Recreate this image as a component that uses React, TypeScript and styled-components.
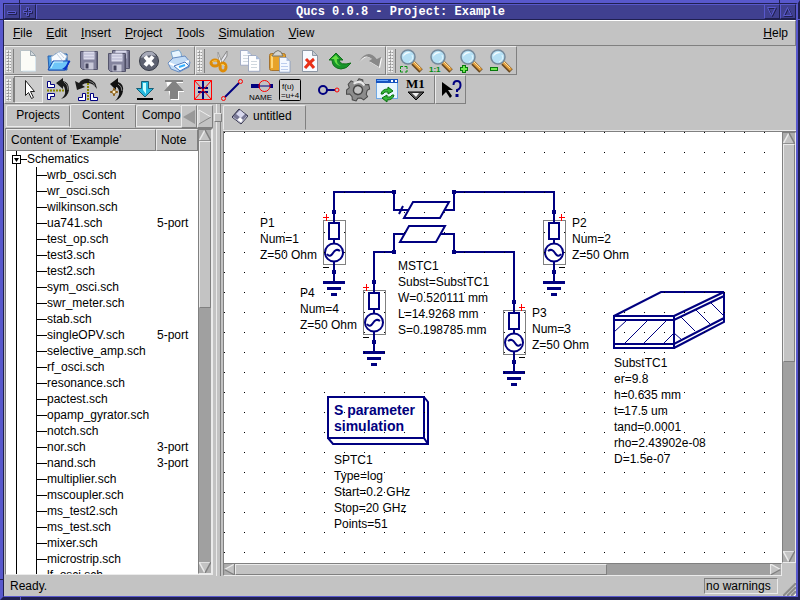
import React from "react";
import styled, { createGlobalStyle, css } from "styled-components";

const c = {
  face: "#c3c3c3",
  light: "#ebebeb",
  dark: "#808080",
  trough: "#a0a0a0",
  frameLight: "#5858cc",
  frame: "#404090",
  frameDark: "#202050",
  navy: "#000080",
};

const Global = createGlobalStyle`
  * { box-sizing: border-box; }
  html, body { margin: 0; height: 100%; overflow: hidden; }
  #root { height: 100%; }
  body, button, table {
    font-family: "Liberation Sans", Arial, sans-serif;
    font-size: 12px;
    line-height: 16px;
    color: #000;
  }
  button { margin: 0; padding: 0; border: 0; background: none; cursor: default; }
`;

const raised = css`
  border: 1px solid;
  border-color: ${c.light} ${c.dark} ${c.dark} ${c.light};
`;

const Frame = styled.div`
  position: relative;
  height: 100vh;
  display: flex;
  border-style: solid;
  border-width: 3px 2px 3px 3px;
  border-color: ${c.frameLight} ${c.frameDark} ${c.frameDark} ${c.frameLight};
  &::before {
    content: "";
    position: absolute;
    inset: -3px -2px -3px -3px;
    pointer-events: none;
    background:
      linear-gradient(${c.frameDark}, ${c.frameDark}) 19px 0 / 1px 3px no-repeat,
      linear-gradient(${c.frameDark}, ${c.frameDark}) 0 19px / 3px 1px no-repeat,
      linear-gradient(${c.frameDark}, ${c.frameDark}) right 20px top 0 / 1px 3px no-repeat,
      linear-gradient(${c.frameLight}, ${c.frameLight}) right 0 top 19px / 3px 1px no-repeat,
      linear-gradient(${c.frameDark}, ${c.frameDark}) 0 calc(100% - 20px) / 3px 1px no-repeat,
      linear-gradient(${c.frameLight}, ${c.frameLight}) 20px 100% / 1px 3px no-repeat;
  }
`;

const Window = styled.div`
  flex: 1;
  min-width: 0;
  display: flex;
  flex-direction: column;
  border-style: solid;
  border-width: 1px 2px 1px 1px;
  border-color: ${c.frameDark} ${c.frameLight} ${c.frameLight} ${c.frameDark};
  background: ${c.face};
`;

const TitleBar = styled.header`
  display: flex;
  height: 16px;
  flex: none;
  background: ${c.frame};
  border-bottom: 1px solid ${c.frameDark};
`;

const TitleText = styled.h1`
  flex: 1;
  margin: 0;
  border-top: 1px solid ${c.frameLight};
  border-left: 1px solid ${c.frameLight};
  color: #fff;
  text-align: center;
  white-space: nowrap;
  font: bold 12px/15px "Liberation Mono", "Courier New", monospace;
`;

const TitleButton = styled.button`
  width: 16px;
  height: 15px;
  border: 1px solid;
  border-color: ${c.frameLight} ${c.frameDark} ${c.frameDark} ${c.frameLight};
  display: grid;
  place-items: center;
`;

const MenuBar = styled.nav`
  display: flex;
  flex: none;
  height: 26px;
  align-items: center;
  padding: 0 5px 0 7px;
  border-top: 1px solid #fff;
  border-bottom: 1px solid ${c.dark};
  border-right: 1px solid ${c.dark};
`;

const MenuItem = styled.button<{ $last?: boolean }>`
  padding: 0 2px;
  margin-right: ${(p) => (p.$last ? "0" : "10px")};
  margin-left: ${(p) => (p.$last ? "auto" : "0")};
`;

const MenuLabel = styled.span`
  display: inline-block;
  &::first-letter { text-decoration: underline; }
`;

const ToolRow = styled.div`
  display: flex;
  flex: none;
  height: 29px;
`;

const ToolBar = styled.div<{ $tail?: boolean }>`
  ${raised}
  display: flex;
  align-items: center;
  padding-right: ${(p) => (p.$tail ? "4px" : "0")};
`;

const Handle = styled.span`
  flex: none;
  width: 9px;
  height: 24px;
  border-right: 1px solid ${c.dark};
  background: radial-gradient(circle at 1px 1px, #eee 0 1px, transparent 1px) 1px 1px / 3px 3px,
    radial-gradient(circle at 2px 2px, #999 0 1px, transparent 1px) 1px 1px / 3px 3px;
  background-clip: content-box;
  padding: 1px 2px 1px 1px;
`;

const Tool = styled.button<{ $compact?: boolean; $active?: boolean }>`
  width: ${(p) => (p.$compact ? "29px" : "30px")};
  height: 27px;
  display: grid;
  place-items: center;
  ${(p) =>
    p.$active &&
    css`
      background: #cdcdcd;
      border: 1px solid;
      border-color: ${c.dark} ${c.light} ${c.light} ${c.dark};
    `}
  svg { display: block; overflow: visible; }
`;

const ToolGap = styled.span`
  width: 10px;
`;

const Workspace = styled.main`
  flex: 1;
  min-height: 0;
  display: flex;
`;

const SidePanel = styled.aside`
  width: 209px;
  flex: none;
  display: flex;
  flex-direction: column;
  padding-left: 1px;
`;

const Tabs = styled.div`
  display: flex;
  align-items: flex-end;
  height: 24px;
  flex: none;
  overflow: hidden;
  padding-left: 1px;
`;

const Tab = styled.button<{ $active?: boolean; $width: number }>`
  flex: none;
  width: ${(p) => p.$width}px;
  height: ${(p) => (p.$active ? "24px" : "22px")};
  margin-bottom: ${(p) => (p.$active ? "0" : "1px")};
  padding-bottom: ${(p) => (p.$active ? "3px" : "2px")};
  border: 1px solid;
  border-color: ${c.light} ${c.dark} ${(p) => (p.$active ? c.face : c.light)} ${c.light};
  border-radius: 2px 2px 0 0;
  overflow: hidden;
  white-space: nowrap;
`;

const ClippedTab = styled(Tab)`
  text-align: left;
  padding-left: 5px;
  flex: 1;
  border-right: 0;
`;

const TabArrow = styled.button`
  ${raised}
  width: 16px;
  height: 23px;
  flex: none;
  display: grid;
  place-items: center;
`;

const ListFrame = styled.section`
  flex: 1;
  min-height: 0;
  display: flex;
  margin-bottom: 1px;
  border: 1px solid;
  border-color: ${c.dark} ${c.light} ${c.light} ${c.dark};
`;

const ListView = styled.div`
  flex: 1;
  min-width: 0;
  overflow: hidden;
  background: #fff;
`;

const FileTable = styled.table`
  width: 100%;
  table-layout: fixed;
  border-collapse: separate;
  border-spacing: 0;
  th {
    ${raised}
    height: 22px;
    padding: 0 4px;
    background: ${c.face};
    font-weight: normal;
    text-align: left;
    white-space: nowrap;
  }
  th:last-child { width: 42px; }
  td { height: 16px; padding: 0; white-space: nowrap; }
  td:last-child { padding-left: 1px; }
`;

const TreeCell = styled.div<{ $root?: boolean }>`
  height: 16px;
  display: flex;
  align-items: center;
  padding-left: ${(p) => (p.$root ? "6px" : "10px")};
`;

const Trunk = styled.span`
  width: 20px;
  height: 16px;
  flex: none;
  border-left: 1px solid #000;
`;

const Limb = styled.span`
  width: 11px;
  height: 16px;
  flex: none;
  border-left: 1px solid #000;
  background: linear-gradient(#000, #000) 0 8px / 10px 1px no-repeat;
`;

const Expander = styled.button`
  display: block;
  width: 15px;
  height: 16px;
  svg { display: block; }
`;

const Bar = styled.div<{ $horizontal?: boolean }>`
  display: flex;
  flex: none;
  flex-direction: ${(p) => (p.$horizontal ? "row" : "column")};
  ${(p) => (p.$horizontal ? "height: 13px;" : "width: 14px;")}
  background: ${c.trough};
  border: 1px solid;
  border-color: ${c.dark} ${c.light} ${c.light} ${c.dark};
`;

const ArrowButton = styled.button`
  display: block;
  flex: none;
  line-height: 0;
  svg { display: block; }
`;

const Thumb = styled.div<{ $size: number }>`
  ${raised}
  background: ${c.face};
  flex: ${(p) => p.$size} 1 0;
`;

const Trough = styled.div<{ $size: number }>`
  flex: ${(p) => p.$size} 1 0;
`;

const Splitter = styled.div`
  width: 10px;
  flex: none;
  display: flex;
  flex-direction: column;
  align-items: center;
`;

const SplitLine = styled.span<{ $grow?: boolean }>`
  width: 5px;
  flex: ${(p) => (p.$grow ? "1" : "0 0 9px")};
  border-left: 1px solid ${c.light};
  border-right: 1px solid ${c.dark};
`;

const SplitGrip = styled.span`
  ${raised}
  width: 8px;
  height: 9px;
  flex: none;
`;

const Documents = styled.section`
  flex: 1;
  min-width: 0;
  display: flex;
  flex-direction: column;
`;

const DocTabs = styled.div`
  height: 27px;
  flex: none;
  display: flex;
  border-bottom: 1px solid ${c.light};
`;

const DocTab = styled.button`
  width: 83px;
  display: flex;
  align-items: center;
  gap: 5px;
  padding: 0 0 3px 8px;
  margin-top: 1px;
  border: 1px solid;
  border-color: ${c.light} ${c.dark} ${c.face} ${c.light};
  border-radius: 2px 2px 0 0;
`;

const CanvasRow = styled.div`
  flex: 1;
  min-height: 0;
  display: flex;
  border-top: 1px solid ${c.dark};
  border-left: 1px solid ${c.dark};
`;

const Canvas = styled.div`
  position: relative;
  flex: 1;
  min-width: 0;
  overflow: hidden;
  background: #fff;
`;

const Drawing = styled.svg`
  display: block;
  width: 100%;
  height: 100%;
`;

const Label = styled.div<{ $x: number; $y: number }>`
  position: absolute;
  left: ${(p) => p.$x}px;
  top: ${(p) => p.$y}px;
  white-space: pre;
`;

const SimTitle = styled(Label)`
  color: ${c.navy};
  font-weight: bold;
  font-size: 14px;
`;

const BottomRow = styled.div`
  display: flex;
  flex: none;
  padding-right: 14px;
  & > div { flex: 1; }
`;

const StatusBar = styled.footer`
  height: 20px;
  flex: none;
  display: flex;
  align-items: center;
  padding-left: 6px;
`;

const StatusText = styled.span`
  flex: 1;
`;

const Warning = styled.span`
  width: 74px;
  height: 16px;
  line-height: 15px;
  padding-left: 1px;
  border: 1px solid;
  border-color: ${c.dark} ${c.light} ${c.light} ${c.dark};
  white-space: nowrap;
`;

const SizeGrip = styled.svg`
  display: block;
  width: 15px;
  height: 14px;
  margin: 6px 0 0 3px;
`;

/* ---------- icons ---------- */

const pageShape = "M0 0h10l5 5v16h-15z";

const Floppy = ({ x = 0, y = 0 }: { x?: number; y?: number }) => (
  <g transform={`translate(${x} ${y})`}>
    <path d="M0 0h17v18h-15l-2-2z" fill="#85859f" stroke="#55556c" />
    <rect x="3" y="0" width="11" height="8" fill="#dcdcec" />
    <path d="M3 2.500h11M3 5.500h11" stroke="#b2b2cc" />
    <rect x="4" y="11" width="9" height="7" fill="#c8c8d8" />
    <rect x="5" y="12" width="3" height="5" fill="#43435c" />
    <path d="M16.500 1v16" stroke="#484860" />
  </g>
);

const Lens = ({ children }: { children?: React.ReactNode }) => (
  <>
    <path d="M14 14l8 8" stroke="#6b4a20" strokeWidth="5" />
    <path d="M14 13l8 8" stroke="#e2a040" strokeWidth="3" />
    <path d="M15 13l6 6" stroke="#ffdf9b" />
    <circle cx="9" cy="8" r="7" fill="#b6e0f4" stroke="#75899b" strokeWidth="1.500" />
    <path d="M4 8a5 5 0 0 1 8-4q-5 0-8 4z" fill="#f2fcff" />
    <path d="M13 6q2 5-3 7" fill="none" stroke="#e6f8ff" />
    {children}
  </>
);

const icons: Record<string, React.ReactNode> = {
  new: (
    <g transform="translate(3.500 1.500)">
      <path d={pageShape} fill="#fbfcf7" stroke="#b8c2c6" />
      <path d="M10 0v5h5z" fill="#d4dade" stroke="#9aa6ae" />
      <path d="M2 20.500h13v-14" stroke="#d8e6ee" fill="none" />
    </g>
  ),
  open: (
    <>
      <path d="M1 7h5l2-2h12v16H2z" fill="#4aa0e8" stroke="#2560b0" />
      <path d="M4 8l9-6 7 5-4 9H5z" fill="#f8fbff" stroke="#9fb4cc" />
      <path d="M12 3l5 6M10 5l5 6" stroke="#c2d2e2" />
      <path d="M1 21l5-9h17l-5 9z" fill="#6dc5f8" stroke="#1748b0" />
      <path d="M15 20q5-3 6-8h2l-4 9z" fill="#0832c4" />
      <path d="M4 19l3-6h9" stroke="#d6f5ff" fill="none" />
    </>
  ),
  save: <Floppy x={3.500} y={2.500} />,
  saveAll: <><Floppy x={5.500} y={1.500} /><Floppy x={1.500} y={4.500} /></>,
  close: (
    <>
      <circle cx="12" cy="12" r="9.500" fill="#5d6170" stroke="#383c48" />
      <path d="M4 9a8 8 0 0 1 15-2q-8-2-15 2z" fill="#a6a9b8" />
      <path d="M8 7.500l8 9M16 7.500l-8 9" stroke="#fff" strokeWidth="4" />
    </>
  ),
  print: (
    <>
      <path d="M6 10L4 3l8-2 2 3 1 6z" fill="#e8f6ff" stroke="#78a5cd" />
      <path d="M1 14l5-5 12-2 5 6-1 5-10 5-8-3z" fill="#c2dcf6" stroke="#658ac0" />
      <path d="M2 14l7 3 13-5" fill="none" stroke="#fff" strokeWidth="2" />
      <path d="M7 17l11-4 4 4-9 5z" fill="#f8fdff" stroke="#4a78c0" />
      <path d="M12 18l6-2" stroke="#35b0ff" strokeWidth="2" />
    </>
  ),
  cut: (
    <>
      <path d="M11 14L19 2v5l-6 9z" fill="#e8e8ee" stroke="#888" />
      <path d="M14 14L10 3v4l2 8z" fill="#fff" stroke="#999" />
      <ellipse cx="7" cy="14" rx="4" ry="3" fill="none" stroke="#dd8b08" strokeWidth="3" />
      <ellipse cx="15" cy="18" rx="3" ry="4" fill="none" stroke="#dd8b08" strokeWidth="3" />
      <path d="M4 13q2-2 5-1M13 16q2-2 4 1" stroke="#ffd050" fill="none" />
    </>
  ),
  copy: (
    <>
      <g transform="translate(2.500 1.500) scale(.7)"><path d={pageShape} fill="#fbfcff" stroke="#8b9aba" /><path d="M10 0v5h5z" fill="#b9c8df" /></g>
      <path d="M5 6.500h6M5 9.500h6M5 12.500h6" stroke="#d0d8df" />
      <g transform="translate(10.500 6.500) scale(.75)"><path d={pageShape} fill="#fff" stroke="#8b9aba" /><path d="M10 0v5h5z" fill="#a6b9d8" /></g>
      <path d="M13 12.500h6M13 15.500h6M13 18.500h6" stroke="#d0d8df" />
    </>
  ),
  paste: (
    <>
      <rect x="1.500" y="4.500" width="16" height="17" rx="2" fill="#e8a328" stroke="#a5722c" />
      <path d="M4 7v12" stroke="#ffd675" strokeWidth="2" />
      <path d="M4 7l3-4q3-3 6 0l2 4z" fill="#d5d5d0" stroke="#77776c" />
      <g transform="translate(11.500 8.500) scale(.7)"><path d={pageShape} fill="#f4f8ff" stroke="#7990b8" /><path d="M10 0v5h5z" fill="#b0c0dc" /></g>
      <path d="M13 14.500h6M13 17.500h7M13 20.500h7" stroke="#bccdee" />
    </>
  ),
  remove: (
    <>
      <g transform="translate(4.500 1.500)"><path d={pageShape} fill="#f7faff" stroke="#8e98a5" /><path d="M10 0v5h5z" fill="#c6ccd4" stroke="#8e98a5" /></g>
      <path d="M8 10q4 4 8 9M16 10q-5 4-9 9" fill="none" stroke="#e83018" strokeWidth="3" />
    </>
  ),
  undo: (
    <>
      <path d="M1 11L8 4l7 7h-4q1 6 12 3-4 6-10 6-9-1-9-9z" fill="#18952a" stroke="#107018" />
      <path d="M3 10l5-4 3 4H9q-1 5 4 7-6-1-7-7z" fill="#68e044" />
    </>
  ),
  redo: (
    <>
      <path d="M2 13Q9 4 15 11l-3 2 10 6 2-10-4 2Q11-1 2 13z" fill="#fff" />
      <path d="M1 12Q8 4 14 10l-3 2 10 6 2-10-4 2Q10-1 1 12z" fill="#888" />
    </>
  ),
  zoomFit: <Lens><path d="M1.500 20v-2.500H4M5.500 17.500H8V20M1.500 21v2H4M6 23h2v-2" stroke="#089010" fill="none" /></Lens>,
  zoomOne: <Lens><text x="0" y="23" fontFamily="Liberation Sans" fontSize="8" fontWeight="bold" fill="#008c10">1:1</text></Lens>,
  zoomIn: <Lens><path d="M5 16v8M1 20h8" stroke="#08780c" strokeWidth="4" /><path d="M5 17v6M2 20h6" stroke="#70e850" strokeWidth="2" /></Lens>,
  zoomOut: <Lens><path d="M1 20h8" stroke="#08780c" strokeWidth="4" /><path d="M2 20h6" stroke="#70e850" strokeWidth="2" /></Lens>,
  select: <path d="M8.500 2.500v15l3-3 3 6 2-1-3-6h4z" fill="#fff" stroke="#222" />,
  mirrorX: (
    <>
      <path d="M10 5L17 0v3q6 1 6 9-1 7-8 9 5-4 4-8 0-4-2-5v3z" fill="#1a1a1a" />
      <path d="M18 4q4 2 4 8" fill="none" stroke="#777" />
      <path d="M1 12.500h17" stroke="#8b8700" strokeWidth="2" strokeDasharray="2 1" />
      <path d="M1.500 3.500h3v3h4v3h-7zM1.500 21.500h3v-3h4v-3h-7z" fill="#fff" stroke="#000080" />
    </>
  ),
  mirrorY: (
    <>
      <path d="M2 12L0 3l4 2q4-5 10-4 7 2 8 10-4-6-9-6-4 0-6 2l3 2z" fill="#1a1a1a" />
      <path d="M14 3q5 1 6 5" fill="none" stroke="#777" />
      <path d="M13 5v18" stroke="#8b8700" strokeWidth="2" strokeDasharray="2 1" />
      <path d="M7.500 15.500h3v7h-7v-3h4zM15.500 15.500h3v4h4v3h-7z" fill="#fff" stroke="#000080" />
    </>
  ),
  rotate: (
    <>
      <path d="M6 6l8-6v4q6 2 5 9-1 7-8 10 5-5 4-10-1-4-3-4v3z" fill="#111" />
      <path d="M14 6q4 2 4 7" stroke="#888" fill="none" />
      <path d="M10 10l1 3 3 1-3 1-1 3-1-3-3-1 3-1z" fill="#fff0cb" stroke="#8b5e16" />
    </>
  ),
  into: (
    <>
      <path d="M8.500 3.500h7v7h5L12 19l-8.500-8.500h5z" fill="#24b6dd" stroke="#176078" />
      <path d="M10 5v7l3 4v-11z" fill="#c8ffff" />
      <path d="M4 21h16" stroke="#000" strokeWidth="2" />
    </>
  ),
  out: (
    <>
      <path d="M4 3h17v2h-6l7 8v1h-5v8h-8z" fill="#fff" />
      <path d="M3 2h18v2h-7l8 9h-6v8H8v-8H2l8-9H3z" fill="#828282" />
    </>
  ),
  deactivate: (
    <>
      <path d="M12 3v7M12 14v7M7 10h10M7 14h10" stroke="#000080" strokeWidth="2" />
      <path d="M3.500 2.500h17v19h-17zL20.500 21.500M20.500 2.500L3.500 21.500" fill="none" stroke="#f00" />
    </>
  ),
  wire: (
    <>
      <path d="M5 19L19 5" stroke="#000080" strokeWidth="2" />
      <circle cx="3.500" cy="20.500" r="2" fill="none" stroke="#f00" /><circle cx="20.500" cy="3.500" r="2" fill="none" stroke="#f00" />
    </>
  ),
  name: (
    <>
      <path d="M2 8h9M21 8h3" stroke="#000080" strokeWidth="4" />
      <circle cx="15.500" cy="8" r="5.500" fill="none" stroke="#f00" /><path d="M11 8h10" stroke="#000080" />
      <text x="0" y="22" fontFamily="Liberation Sans" fontSize="8">NAME</text>
    </>
  ),
  equation: (
    <>
      <rect x="1.500" y="1.500" width="21" height="21" rx="1" fill="#d0d0d0" stroke="#000" />
      <text x="4" y="11" fontFamily="Liberation Sans" fontSize="8">f(u)</text>
      <text x="3" y="20" fontFamily="Liberation Sans" fontSize="8">=u+4</text>
    </>
  ),
  port: (
    <>
      <path d="M10 12h8" stroke="#000080" strokeWidth="2" /><circle cx="6" cy="12" r="4" fill="none" stroke="#000080" strokeWidth="2" />
      <circle cx="20" cy="12" r="2" fill="none" stroke="#f00" />
    </>
  ),
  simulate: (
    <g transform="rotate(15 12 12)">
      <path d="M10 1h4l1 3 3 1 3-1 2 4-2 2v4l2 2-3 4-3-1-3 1-1 3h-4l-1-3-3-2-3 1-1-4 2-3-2-3 2-4 4 1 2-2z" fill="#8c8c8c" stroke="#484848" />
      <path d="M6 7q6-6 11-1" stroke="#e8e8e8" fill="none" strokeWidth="2" />
      <circle cx="12" cy="12" r="4.500" fill={c.face} stroke="#444" strokeWidth="1.500" />
    </g>
  ),
  display: (
    <>
      <rect x="1.500" y="1.500" width="21" height="19" fill="#e7f5ff" stroke="#70a8e4" />
      <path d="M1 3h22" stroke="#1553c0" strokeWidth="4" /><path d="M2 2.500h11" stroke="#69aaff" /><path d="M16 3h2M20 3h2" stroke="#fff" strokeWidth="2" />
      <path d="M6 16q1-5 7-5v-2l5 4-5 3v-2q-4-1-5 2z" fill="#35b83a" stroke="#087010" />
      <path d="M19 17q-1 5-7 5v2l-5-4 5-3v2q4 1 5-2z" fill="#35b83a" stroke="#087010" />
    </>
  ),
  marker: (
    <>
      <text x="2" y="10" fontFamily="Liberation Serif" fontSize="13" fontWeight="bold">M1</text>
      <path d="M4 14h16l-8 8z" fill="#555" stroke="#000" /><path d="M8 15h7l-3 4z" fill="#f0f0f0" />
    </>
  ),
  help: (
    <>
      <path d="M3 4v14l4-4 4 6 2-2-4-6h5z" fill="#000" />
      <path d="M14.500 7q0-4 3.500-4t3.500 4-3.500 5v2" stroke="#000080" strokeWidth="2" fill="none" />
      <path d="M18 16v3" stroke="#000080" strokeWidth="3" />
    </>
  ),
};

const Icon = ({ name }: { name: string }) => (
  <svg width="24" height="24" viewBox="0 0 24 24" aria-hidden="true">
    <g fill="#000">{icons[name]}</g>
  </svg>
);

const ToolSet = ({ tools, compact }: { tools: string[]; compact?: boolean }) => (
  <>
    {tools.map((t) => (
      <Tool key={t} $compact={compact} $active={t === "select"} aria-label={t}>
        <Icon name={t} />
      </Tool>
    ))}
  </>
);

const Arrow = ({ dir }: { dir: "up" | "right" | "down" | "left" }) => {
  const edges = {
    up: ["M0 11L6 0", "M6 0L12 11H0"],
    right: ["M0 12V0L11 6", "M11 6L0 12"],
    down: ["M6 11L0 0H12", "M12 0L6 11"],
    left: ["M0 6L11 0", "M11 0V12L0 6"],
  }[dir];
  const tall = dir === "up" || dir === "down";
  return (
    <ArrowButton aria-label={`Scroll ${dir}`}>
      <svg width={tall ? 12 : 11} height="11" viewBox={tall ? "0 0 12 11" : "0 0 11 12"}>
        <rect width="12" height="12" fill="#adadad" />
        <path d={edges.join(" ")} fill={c.face} />
        <path d={edges[0]} fill="none" stroke={c.light} strokeWidth="1.500" />
        <path d={edges[1]} fill="none" stroke={c.dark} strokeWidth="1.500" />
      </svg>
    </ArrowButton>
  );
};

/* ---------- schematic ---------- */

type Pos = { x: number; y: number };

const Node = ({ x, y }: Pos) => <rect x={x - 2} y={y - 2} width="4" height="4" fill={c.navy} stroke="none" />;

const Source = ({ x, y, flip }: Pos & { flip?: boolean }) => (
  <g transform={`translate(${x} ${y})`}>
    <rect x="-10.500" y="8.500" width="22" height="44" stroke={c.dark} strokeWidth="1" />
    <path d="M0 0V10M0 27V31M0 50V70" />
    <rect x="-5" y="11" width="10" height="16" />
    <circle cx="0" cy="40.500" r="9" />
    <g transform={flip ? "scale(-1 1)" : undefined}>
      <path d="M-7 42Q-4 46-1 41T6 39" />
      <path d="M-11 5.500h6M-7.500 2v7" stroke="#f00" strokeWidth="1" />
      <path d="M-11 55.500h6" stroke="#000" strokeWidth="1" />
    </g>
    <path d="M-11 70.500H11M-7 76.500H7M-3 82.500H3" strokeWidth="3" />
    <Node x={0} y={0} />
    <Node x={0} y={60} />
  </g>
);

const Schematic = () => (
  <Drawing aria-label="Schematic">
    <defs>
      <pattern id="grid" width="20" height="20" patternUnits="userSpaceOnUse">
        <rect width="1" height="1" fill="#000" />
      </pattern>
    </defs>
    <g fill="none" stroke={c.navy} strokeWidth="2">
      <path d="M110 80V60H170V78H184M220 78H230V60H330V80" />
      <path d="M150 150V120H170V102H180M217 102H230V120H290V170" />
      <path d="M189 70H225L216 86H180ZM185 94H221L212 110H176ZM175 82L179 74" />
      <Node x={170} y={60} /><Node x={230} y={60} /><Node x={170} y={120} /><Node x={230} y={120} />
      <Source x={110} y={80} /><Source x={150} y={150} />
      <Source x={330} y={80} flip /><Source x={290} y={170} flip />
      <path d="M390 184L437 160H500L450 184M390 184H450V216H390ZM390 188H450L500 164M390 212H450L500 186M450 216L500 190V160" />
      <path d="M390 200L402 189M401 211L423 189M420 211L442 189M440 211L450 201L458 208M457 185L471 199M472 178L486 192M487 171L500 184" strokeWidth="1" />
      <path d="M104 265H200V306H104ZM200 265L204 270V312H109L104 306M200 306L204 312" />
    </g>
    <rect width="100%" height="100%" fill="url(#grid)" />
  </Drawing>
);

const labels: { x: number; y: number; lines: string[] }[] = [
  { x: 36, y: 83, lines: ["P1", "Num=1", "Z=50 Ohm"] },
  { x: 76, y: 153, lines: ["P4", "Num=4", "Z=50 Ohm"] },
  { x: 174, y: 126, lines: ["MSTC1", "Subst=SubstTC1", "W=0.520111 mm", "L=14.9268 mm", "S=0.198785 mm"] },
  { x: 348, y: 83, lines: ["P2", "Num=2", "Z=50 Ohm"] },
  { x: 308, y: 173, lines: ["P3", "Num=3", "Z=50 Ohm"] },
  { x: 390, y: 223, lines: ["SubstTC1", "er=9.8", "h=0.635 mm", "t=17.5 um", "tand=0.0001", "rho=2.43902e-08", "D=1.5e-07"] },
  { x: 110, y: 320, lines: ["SPTC1", "Type=log", "Start=0.2 GHz", "Stop=20 GHz", "Points=51"] },
];

const files: [string, string?][] = [
  ["wrb_osci.sch"], ["wr_osci.sch"], ["wilkinson.sch"], ["ua741.sch", "5-port"], ["test_op.sch"],
  ["test3.sch"], ["test2.sch"], ["sym_osci.sch"], ["swr_meter.sch"], ["stab.sch"],
  ["singleOPV.sch", "5-port"], ["selective_amp.sch"], ["rf_osci.sch"], ["resonance.sch"],
  ["pactest.sch"], ["opamp_gyrator.sch"], ["notch.sch"], ["nor.sch", "3-port"], ["nand.sch", "3-port"],
  ["multiplier.sch"], ["mscoupler.sch"], ["ms_test2.sch"], ["ms_test.sch"], ["mixer.sch"],
  ["microstrip.sch"], ["lf_osci.sch"],
];

const titleGlyph = (d: string) => (
  <svg width="12" height="12" viewBox="0 0 12 12">
    <path d={d} fill="none" stroke={c.frameDark} transform="translate(1 1)" />
    <path d={d} fill="none" stroke={c.frameLight} />
  </svg>
);

export default function App() {
  return (
    <Frame>
      <Global />
      <Window>
        <TitleBar>
          <TitleButton aria-label="Window menu">{titleGlyph("M1.500 5.500h8v2h-8z")}</TitleButton>
          <TitleButton aria-label="Stick">{titleGlyph("M4.500 1.500h2v3h3v2h-3v3h-2v-3h-3v-2h3z")}</TitleButton>
          <TitleText>Qucs 0.0.8 - Project: Example</TitleText>
          <TitleButton aria-label="Minimize">{titleGlyph("M1.500 1.500h8l-4 8z")}</TitleButton>
          <TitleButton aria-label="Maximize">{titleGlyph("M1.500 9.500h8l-4-8z")}</TitleButton>
        </TitleBar>
        <MenuBar>
          {["File", "Edit", "Insert", "Project", "Tools", "Simulation", "View"].map((m) => (
            <MenuItem key={m}><MenuLabel>{m}</MenuLabel></MenuItem>
          ))}
          <MenuItem $last><MenuLabel>Help</MenuLabel></MenuItem>
        </MenuBar>
        <ToolRow>
          <ToolBar>
            <Handle /><ToolSet tools={["new", "open", "save", "saveAll", "close", "print"]} />
          </ToolBar>
          <ToolBar>
            <Handle /><ToolSet tools={["cut", "copy", "paste", "remove", "undo", "redo"]} />
          </ToolBar>
          <ToolBar>
            <Handle /><ToolSet tools={["zoomFit", "zoomOne", "zoomIn", "zoomOut"]} />
          </ToolBar>
        </ToolRow>
        <ToolRow>
          <ToolBar $tail>
            <Handle />
            <ToolSet compact tools={["select", "mirrorX", "mirrorY", "rotate", "into", "out", "deactivate", "wire", "name", "equation"]} />
            <ToolGap />
            <ToolSet compact tools={["port", "simulate", "display", "marker"]} />
          </ToolBar>
          <ToolBar>
            <ToolSet compact tools={["help"]} />
          </ToolBar>
        </ToolRow>
        <Workspace>
          <SidePanel>
            <Tabs role="tablist">
              <Tab role="tab" $width={64}>Projects</Tab>
              <Tab role="tab" $width={66} $active aria-selected>Content</Tab>
              <ClippedTab role="tab" $width={46}>Compo</ClippedTab>
              <TabArrow aria-label="Previous tabs">
                <svg width="14" height="14" viewBox="0 0 14 14"><path d="M13 0v14L1 7z" fill="#999" /></svg>
              </TabArrow>
              <TabArrow aria-label="Next tabs">
                <svg width="14" height="16" viewBox="0 0 14 16"><path d="M1 15V1l12 7" fill="none" stroke="#eee" /><path d="M13 8L1 15" stroke="#888" /></svg>
              </TabArrow>
            </Tabs>
            <ListFrame>
              <ListView>
                <FileTable>
                  <thead>
                    <tr><th>Content of ’Example’</th><th>Note</th></tr>
                  </thead>
                  <tbody>
                    <tr>
                      <td>
                        <TreeCell $root>
                          <Expander aria-label="Collapse Schematics">
                            <svg width="15" height="16" viewBox="0 0 15 16">
                              <path d="M4.500 0v16M9 8.500h6" stroke="#000" />
                              <rect x=".5" y="4.500" width="8" height="8" fill="#fff" stroke="#000" />
                              <path d="M2 7h5L4.500 11z" />
                            </svg>
                          </Expander>
                          Schematics
                        </TreeCell>
                      </td>
                      <td />
                    </tr>
                    {files.map(([name, note]) => (
                      <tr key={name}>
                        <td><TreeCell><Trunk /><Limb />{name}</TreeCell></td>
                        <td>{note}</td>
                      </tr>
                    ))}
                  </tbody>
                </FileTable>
              </ListView>
              <Bar><Arrow dir="up" /><Thumb $size={166} /><Trough $size={256} /><Arrow dir="down" /></Bar>
            </ListFrame>
          </SidePanel>
          <Splitter><SplitLine /><SplitGrip /><SplitLine $grow /></Splitter>
          <Documents>
            <DocTabs role="tablist">
              <DocTab role="tab" aria-selected>
                <svg width="16" height="17" viewBox="0 0 16 17">
                  <path d="M0 9L7 1l9 7-7 8z" fill="#777795" stroke="#303048" />
                  <path d="M4 6l4-4 5 4-4 4z" fill="#d8d8ee" />
                  <path d="M5 12l3-3 3 3-2 3z" fill="#fff" />
                  <path d="M1 9l8 6 6-7" stroke="#b8b8cc" fill="none" />
                </svg>
                untitled
              </DocTab>
            </DocTabs>
            <CanvasRow>
              <Canvas>
                <Schematic />
                {labels.map((l) => (
                  <Label key={l.lines[0]} $x={l.x} $y={l.y}>{l.lines.join("\n")}</Label>
                ))}
                <SimTitle $x={110} $y={270}>{"S parameter\nsimulation"}</SimTitle>
              </Canvas>
              <Bar><Arrow dir="up" /><Thumb $size={218} /><Trough $size={190} /><Arrow dir="down" /></Bar>
            </CanvasRow>
            <BottomRow>
              <Bar $horizontal><Arrow dir="left" /><Thumb $size={372} /><Trough $size={164} /><Arrow dir="right" /></Bar>
            </BottomRow>
          </Documents>
        </Workspace>
        <StatusBar>
          <StatusText>Ready.</StatusText>
          <Warning>no warnings</Warning>
          <SizeGrip viewBox="0 0 15 14">
            <path d="M1 14L15 0M5 14L15 4M9 14L15 8M13 14l2-2" stroke="#fff" />
            <path d="M2 14L15 1M6 14L15 5M10 14L15 9" stroke="#888" strokeWidth="2" />
          </SizeGrip>
        </StatusBar>
      </Window>
    </Frame>
  );
}
